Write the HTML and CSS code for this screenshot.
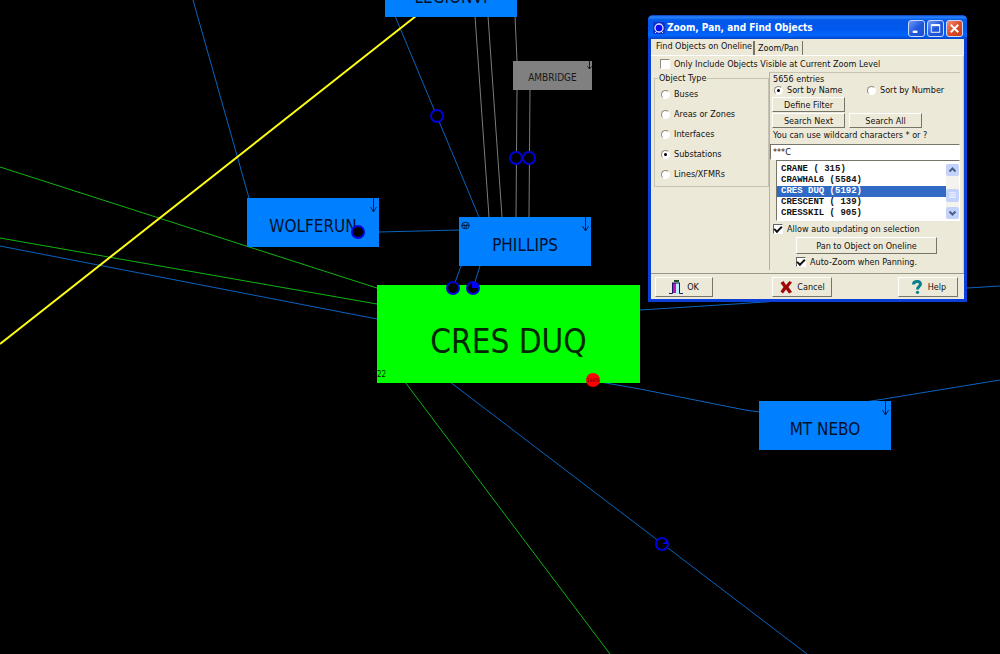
FILE: index.html
```
<!DOCTYPE html>
<html lang="en">
<head>
<meta charset="utf-8">
<title>Oneline Diagram</title>
<link rel="stylesheet" href="styles.css">
</head>
<body>
<main class="oneline">
  <svg class="layer" aria-hidden="true">
    <g class="line-blue">
      <path d="M193 0L249 198M0 246L377 319M450 382L807 654M600 382L640 389L745 410L760 412M865 402L890 398L1000 380M640 310L735 304L967 288L1000 286M379 232L459 230M395 16L479 217M461 266L453 288M480 266L473 288"/>
    </g>
    <path class="line-green" d="M0 167L377 288M0 238L377 304M405 382L610 654"/>
    <path class="line-gray" d="M475 16L489 217M488 16L502 217M515 16L517 61M517 90L516 217M530 90L529 217"/>
    <path class="line-yellow" d="M0 344L416 16"/>
  </svg>

  <div class="node node-legion">LEGIONVI</div>
  <div class="node node-ambridge">AMBRIDGE
    <svg class="arrow arrow-small" viewBox="0 0 5 9"><path d="M2.500 0V8M.5 5.500L2.500 8L4.500 5.500"/></svg>
  </div>
  <div class="node node-wolferun">WOLFERUN
    <svg class="arrow" viewBox="0 0 7 15"><path d="M3.500 0V14M.5 9L3.500 14L6.500 9"/></svg>
  </div>
  <div class="node node-phillips">PHILLIPS
    <svg class="arrow" viewBox="0 0 7 15"><path d="M3.500 0V14M.5 9L3.500 14L6.500 9"/></svg>
    <svg class="generator" viewBox="0 0 9 9"><ellipse cx="4.500" cy="4.500" rx="3.800" ry="3.200"/><path d="M1 4.500H8M3 3V4.500M6 3V4.500M3 6H6"/></svg>
  </div>
  <div class="node node-cres">CRES DUQ<span class="count">22</span></div>
  <div class="node node-nebo">MT NEBO
    <svg class="arrow" viewBox="0 0 7 15"><path d="M3.500 0V14M.5 9L3.500 14L6.500 9"/></svg>
  </div>

  <svg class="layer" aria-hidden="true">
    <g class="pie">
      <circle cx="437" cy="116" r="6"/>
      <circle cx="516" cy="158" r="6"/>
      <circle cx="529" cy="158" r="6"/>
      <circle cx="358" cy="232" r="6"/>
      <circle cx="453" cy="288" r="6"/>
      <circle cx="473" cy="288" r="6"/>
      <circle cx="662" cy="544" r="6"/>
    </g>
    <path class="pie-fill" d="M472 288V282A6 6 0 0 1 479 288ZM662 544L667 541A6 6 0 0 1 668 544Z"/>
    <circle class="overload" cx="593" cy="380" r="7"/>
    <text class="overload-text" x="593" y="382">146%</text>
  </svg>

  <section class="dialog" role="dialog" aria-labelledby="dialog-title">
    <header class="titlebar">
      <svg class="app-icon" viewBox="0 0 12 12"><rect width="12" height="12" rx="2" fill="#1230c8"/><circle cx="6" cy="6" r="4" fill="#0a0af0" stroke="#dce6ff" stroke-width="1.300"/><path d="M2 11L4 9M8 9L10 11" stroke="#dce6ff"/></svg>
      <h1 class="title" id="dialog-title">Zoom, Pan, and Find Objects</h1>
      <button class="caption" aria-label="Minimize"><svg viewBox="0 0 16 16"><path d="M4 11.500H9" stroke-width="2.500"/></svg></button>
      <button class="caption" aria-label="Maximize"><svg viewBox="0 0 16 16"><path d="M4 4.500H12.500" stroke-width="2"/><rect x="3.500" y="4" width="9" height="8"/></svg></button>
      <button class="caption caption-close" aria-label="Close"><svg viewBox="0 0 16 16"><path d="M4 4L12 12M12 4L4 12" stroke-width="2"/></svg></button>
    </header>
    <div class="client">
      <div class="tabs" role="tablist">
        <button class="tab tab-active" role="tab" aria-selected="true">Find Objects on Oneline</button>
        <button class="tab" role="tab" aria-selected="false">Zoom/Pan</button>
      </div>
      <div class="page">
        <label class="option option-visible"><input type="checkbox" class="check">Only Include Objects Visible at Current Zoom Level</label>
        <div class="columns">
          <fieldset class="types">
            <legend>Object Type</legend>
            <label class="option"><input type="radio" class="radio" name="type">Buses</label>
            <label class="option"><input type="radio" class="radio" name="type">Areas or Zones</label>
            <label class="option"><input type="radio" class="radio" name="type">Interfaces</label>
            <label class="option"><input type="radio" class="radio" name="type" checked>Substations</label>
            <label class="option"><input type="radio" class="radio" name="type">Lines/XFMRs</label>
          </fieldset>
          <div class="search">
            <div class="entries">5656 entries</div>
            <div class="sort">
              <label class="option"><input type="radio" class="radio" name="sort" checked>Sort by Name</label>
              <label class="option"><input type="radio" class="radio" name="sort">Sort by Number</label>
            </div>
            <div class="buttons">
              <button class="button">Define Filter</button>
            </div>
            <div class="buttons">
              <button class="button">Search Next</button>
              <button class="button">Search All</button>
            </div>
            <label class="hint" for="pattern">You can use wildcard characters * or ?</label>
            <input class="pattern" id="pattern" type="text" value="***C">
            <div class="list">
              <select class="results" size="5" aria-label="Substations">
                <option>CRANE ( 315)</option>
                <option>CRAWHAL6 (5584)</option>
                <option selected>CRES DUQ (5192)</option>
                <option>CRESCENT ( 139)</option>
                <option>CRESSKIL ( 905)</option>
              </select>
              <div class="scroll" aria-hidden="true">
                <svg class="scroll-part" viewBox="0 0 12 12"><path d="M3 7.500L6 4.500L9 7.500"/></svg>
                <svg class="scroll-part scroll-thumb" viewBox="0 0 12 12"><path class="grip" d="M3 3.500H9M3 5.500H9M3 7.500H9"/></svg>
                <svg class="scroll-part" viewBox="0 0 12 12"><path d="M3 4.500L6 7.500L9 4.500"/></svg>
              </div>
            </div>
            <label class="option option-auto"><input type="checkbox" class="check" checked>Allow auto updating on selection</label>
            <button class="button button-pan">Pan to Object on Oneline</button>
            <label class="option option-zoom"><input type="checkbox" class="check" checked>Auto-Zoom when Panning.</label>
          </div>
        </div>
      </div>
      <footer class="actions">
        <button class="button button-ok"><svg class="icon" viewBox="0 0 14 14"><path d="M0 13.500H3.500V3M10.500 3V13.500H14" fill="none" stroke="#1a1a5c"/><rect x="4" y="3" width="3" height="10" fill="#c010c8"/><rect x="7" y="3" width="3" height="11" fill="#b8f0ff"/><path d="M3 3H11" stroke="#111166"/><rect x="5" y="0" width="5" height="2" fill="#174d25"/></svg>OK</button>
        <button class="button button-cancel"><svg class="icon" viewBox="0 0 14 14"><path d="M1.500 3L4.500 1L7 5L10.500 1L13 2.500L9.500 7L13 12L10 13.500L7 9.500L4 13.500L1.500 11.500L4.500 7Z" fill="#a00808"/></svg>Cancel</button>
        <button class="button button-help"><svg class="icon" viewBox="0 0 14 14"><path d="M3.500 4.500C3.500 .5 10.500 .5 10.500 4C10.500 6.500 7.500 6.500 7.500 9.500" fill="none" stroke="#087f8c" stroke-width="3"/><circle cx="7.500" cy="12.300" r="1.600" fill="#087f8c"/></svg>Help</button>
      </footer>
    </div>
  </section>
</main>
</body>
</html>
```

FILE: styles.css
```
* {
  box-sizing: border-box;
}

body {
  margin: 0;
  background: #000;
  font-family: "DejaVu Sans Condensed", "DejaVu Sans", sans-serif;
}

.oneline {
  position: relative;
  min-height: 100vh;
  overflow: hidden;
}

/* Diagram */
.layer {
  position: absolute;
  inset: 0;
  width: 100%;
  height: 100%;
  fill: none;
}

.line-blue { stroke: #0a64be; }
.line-green { stroke: #10b410; }
.line-gray { stroke: #7c7c7c; }
.line-yellow { stroke: #ffff14; stroke-width: 2; }

.pie {
  fill: #000;
  stroke: #0000d8;
  stroke-width: 2;
}

.pie-fill { fill: #0000ff; }
.overload { fill: #ff0000; }

.overload-text {
  fill: #500000;
  font-size: 5px;
  text-anchor: middle;
}

.node {
  position: absolute;
  display: flex;
  align-items: center;
  justify-content: center;
  width: 132px;
  height: 49px;
  padding-top: 6px;
  background: #0080ff;
  color: #00102c;
  font-size: 17px;
}

.node-legion {
  left: 385px;
  top: -32px;
  padding-top: 8px;
}

.node-wolferun { left: 247px; top: 198px; }
.node-phillips { left: 459px; top: 217px; }
.node-nebo { left: 759px; top: 401px; }

.node-ambridge {
  left: 513px;
  top: 61px;
  width: 79px;
  height: 29px;
  padding-top: 3px;
  background: #808080;
  color: #181818;
  font-size: 10px;
}

.node-cres {
  left: 377px;
  top: 285px;
  width: 263px;
  height: 98px;
  padding-top: 14px;
  background: #00ff00;
  color: #002800;
  font-size: 33px;
}

.count {
  position: absolute;
  left: 0;
  bottom: 4px;
  font-size: 8px;
}

.arrow {
  position: absolute;
  top: 0;
  right: 2px;
  width: 7px;
  height: 15px;
  fill: none;
  stroke: #00204c;
}

.arrow-small {
  right: 0;
  width: 5px;
  height: 9px;
  stroke: #181818;
}

.generator {
  position: absolute;
  top: 4px;
  left: 2px;
  width: 9px;
  height: 9px;
  fill: none;
  stroke: #001c40;
}

/* Dialog window */
.dialog {
  position: absolute;
  left: 648px;
  top: 15px;
  width: 319px;
  padding: 0 3px 3px;
  border-radius: 5px 5px 0 0;
  background: #0a3fd8;
  color: #111;
  font-size: 9px;
  line-height: 12px;
}

.dialog button,
.dialog input {
  margin: 0;
  color: inherit;
  font: inherit;
}

.titlebar {
  display: flex;
  align-items: center;
  gap: 2px;
  height: 24px;
  margin: 0 -3px;
  padding: 2px 4px 0 5px;
  border-radius: 5px 5px 0 0;
  background: linear-gradient(#0838b8, #2a86ff 2px, #0458e8 5px, #0058ee 14px, #0066ff 20px, #0044c8);
}

.app-icon {
  width: 12px;
  height: 12px;
}

.title {
  flex: 1;
  margin: 0;
  color: #fff;
  font-size: 10px;
  font-weight: bold;
}

.dialog .caption {
  width: 17px;
  height: 17px;
  padding: 0;
  border: 1px solid #c8d8ff;
  border-radius: 3px;
  background: linear-gradient(135deg, #6e9cf8, #2258dc 50%, #1c50d0);
}

.dialog .caption-close {
  background: linear-gradient(135deg, #f0927a, #dc4c28 50%, #c83c18);
}

.caption svg {
  display: block;
  width: 15px;
  height: 15px;
  fill: none;
  stroke: #fff;
}

.client {
  background: #ece9d8;
}

.tabs {
  display: flex;
  align-items: flex-end;
  height: 16px;
}

.tab {
  height: 14px;
  padding: 0 3px;
  border: 0;
  border-right: 1px solid #77756a;
  background: none;
  line-height: 14px;
  white-space: nowrap;
}

.dialog .tab-active {
  height: 16px;
  padding: 0 0 1px 5px;
  border-right: 0;
  line-height: 15px;
}

.dialog .tab-active + .tab {
  margin-left: 1px;
  border-left: 2px solid #77756a;
}

.page {
  padding: 2px 3px 3px;
  border-top: 1px solid #fff;
  border-right: 1px solid #c8c5b2;
}

.option {
  display: flex;
  align-items: center;
  gap: 4px;
  height: 12px;
  white-space: nowrap;
}

.option-visible {
  margin-left: 6px;
}

.check,
.radio {
  display: grid;
  place-items: center;
  flex: none;
  width: 10px;
  height: 10px;
  appearance: none;
  border: 1px solid #8e8c80;
  border-right-color: #fff;
  border-bottom-color: #fff;
  background: #fff;
}

.check:checked {
  border-top-color: #68665c;
  border-left-color: #68665c;
}

.check:checked::after {
  content: "";
  width: 6px;
  height: 3px;
  margin-bottom: 2px;
  border-left: 2px solid #111;
  border-bottom: 2px solid #111;
  transform: rotate(-45deg);
}

.radio {
  width: 9px;
  height: 9px;
  border-radius: 50%;
}

.radio:checked::after {
  content: "";
  width: 3px;
  height: 3px;
  border-radius: 50%;
  background: #000;
}

.columns {
  display: flex;
  align-items: flex-start;
  margin-top: 2px;
}

.types {
  display: flex;
  flex-direction: column;
  gap: 8px;
  width: 115px;
  min-width: 0;
  margin: 0;
  padding: 4px 6px 6px;
  border: 1px solid #c6c3b3;
}

.types legend {
  margin-left: -3px;
  padding: 0 1px;
}

.search {
  display: flex;
  flex-direction: column;
  align-items: stretch;
  flex: 1;
  min-width: 0;
  height: 198px;
  border-top: 1px solid #c6c3b3;
  border-left: 1px solid #b4b1a2;
}

.entries {
  height: 11px;
  padding-left: 3px;
}

.sort {
  display: grid;
  grid-template-columns: 1fr 1fr;
  padding-left: 4px;
  height: 13px;
}

.buttons {
  display: flex;
  gap: 4px;
  padding: 0 0 1px 2px;
}

.button {
  display: flex;
  align-items: center;
  justify-content: center;
  gap: 4px;
  width: 73px;
  height: 15px;
  padding: 0;
  border: 1px solid;
  border-color: #fff #77756a #77756a #fff;
  background: #ece9d8;
  white-space: nowrap;
}

.hint {
  height: 15px;
  padding-left: 3px;
  white-space: nowrap;
}

.dialog .pattern {
  width: 100%;
  height: 16px;
  padding: 0 2px;
  border: 1px solid #77756a;
  border-right-color: #fff;
  border-bottom-color: #fff;
  background: #fff;
}

.list {
  display: flex;
  height: 61px;
  margin-left: 6px;
  padding: 3px 0 1px;
  border: 1px solid #77756a;
  border-right-color: #fff;
  border-bottom-color: #fff;
  background: #fff;
}

.results {
  flex: 1;
  min-width: 0;
  height: 55px;
  padding: 0;
  border: 0;
  outline: 0;
  border-radius: 0;
  background: #fff;
  color: #111;
  font: 9px/11px "Liberation Mono", monospace;
  overflow: hidden;
  scrollbar-width: none;
}

.results option {
  min-height: 11px;
  height: 11px;
  padding: 0 4px;
  font-weight: bold;
}

.results option:checked {
  background: #316ac5 linear-gradient(#316ac5, #316ac5);
  color: #fff;
  -webkit-text-fill-color: #fff;
}

.scroll {
  display: flex;
  flex-direction: column;
  justify-content: space-between;
  width: 13px;
  background: #f4f3ee;
}

.scroll-part {
  width: 13px;
  height: 12px;
  border-radius: 2px;
  background: #c4d3fc;
  fill: none;
  stroke: #4d6185;
  stroke-width: 2;
}

.scroll-thumb {
  margin-top: 8px;
  height: 13px;
}

.grip {
  stroke: #eef4ff;
  stroke-width: 1;
}

.option-auto {
  margin: 2px 0 2px 3px;
}

.dialog .button-pan {
  width: 141px;
  height: 17px;
  margin-left: 26px;
}

.option-zoom {
  margin: 2px 0 0 26px;
}

.actions {
  display: grid;
  grid-template-columns: 117px 1fr auto;
  padding: 3px 6px 2px 4px;
  border-top: 1px solid #98968a;
}

.actions .button {
  width: 60px;
  height: 20px;
}

.actions .button-ok {
  width: 58px;
}

.icon {
  width: 14px;
  height: 14px;
}
```
